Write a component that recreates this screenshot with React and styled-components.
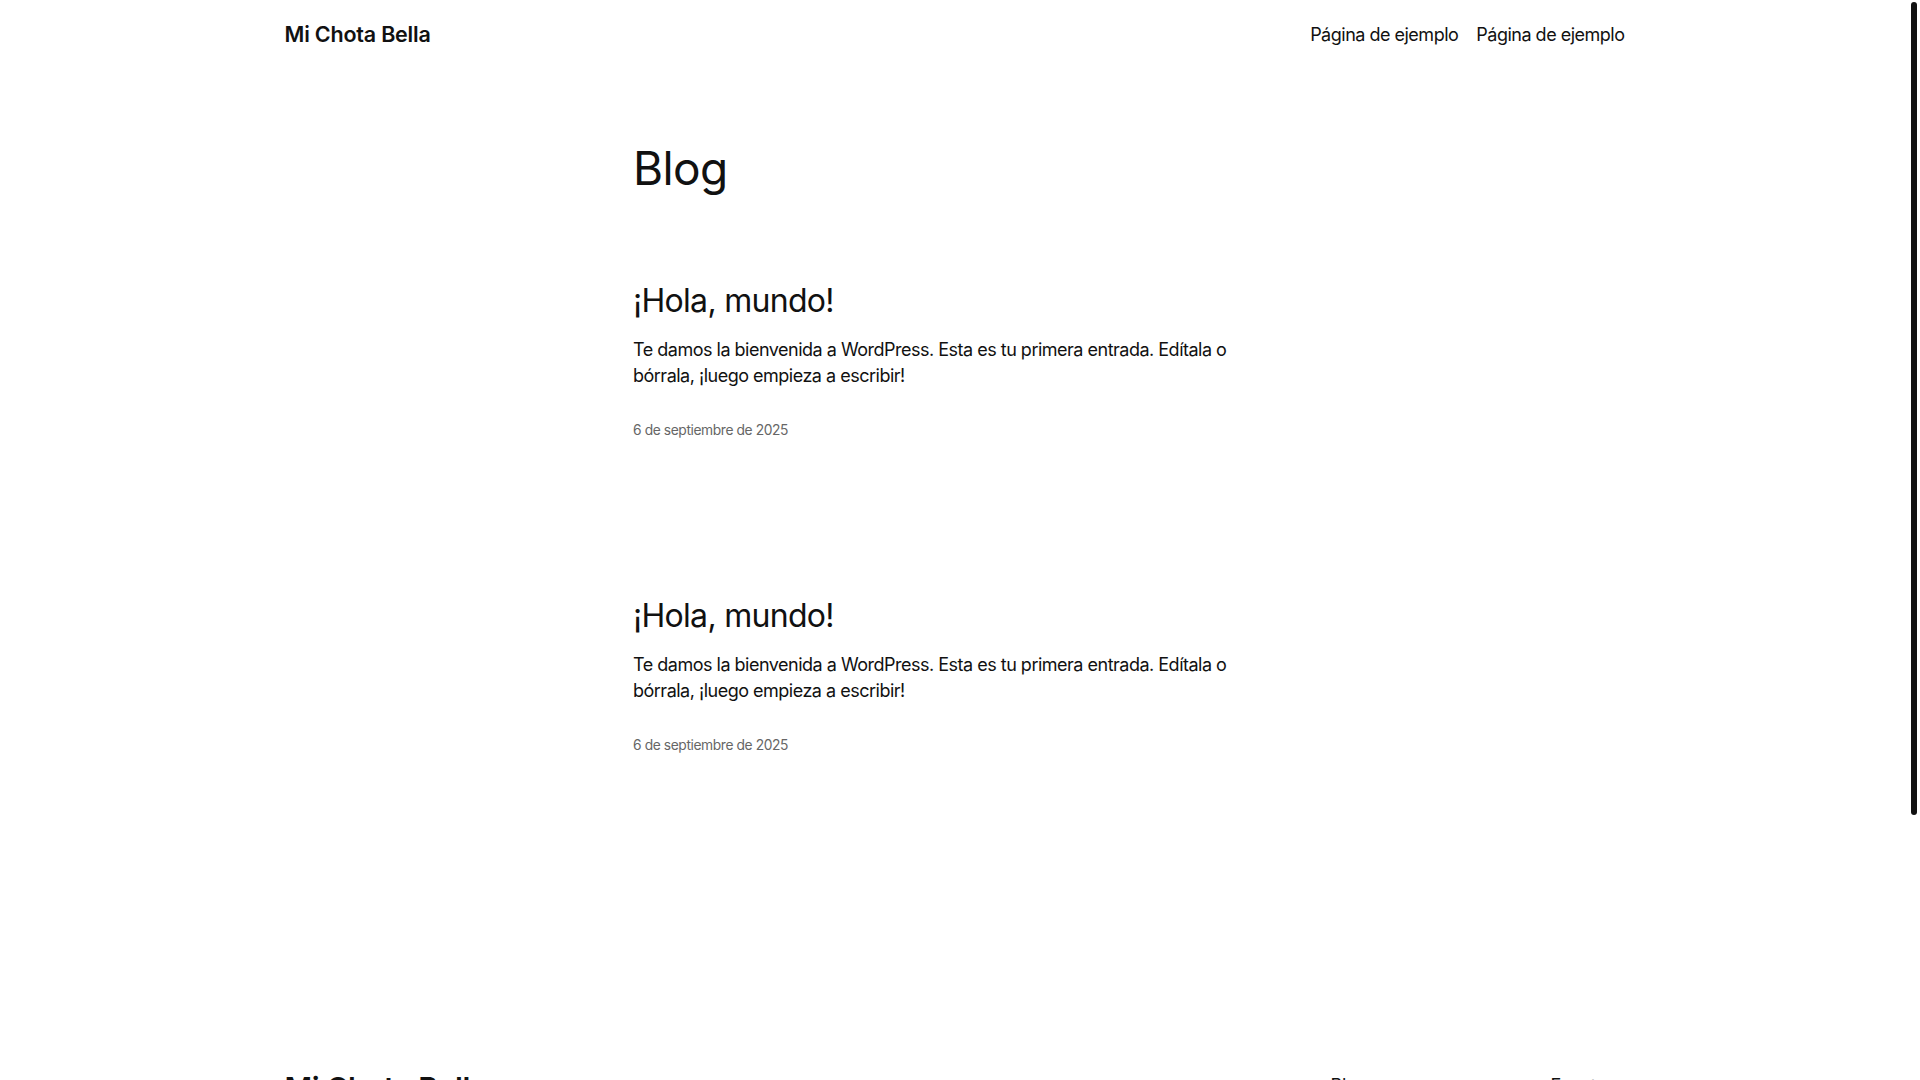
import styled, { createGlobalStyle } from "styled-components";

const GlobalStyle = createGlobalStyle`
  html, body {
    margin: 0;
    padding: 0;
    background: #ffffff;
  }
  body {
    font-family: Inter, "Noto Sans", "Liberation Sans", sans-serif;
    color: #111111;
    -webkit-font-smoothing: antialiased;
  }
`;

// the browser scrollbar of the reference: track reserved on the right, dark thumb over it
const Page = styled.div`
  min-height: 1436px;
  padding-right: 11px;
`;

const ScrollThumb = styled.div`
  position: fixed;
  top: 2px;
  right: 3px;
  width: 6px;
  height: 813px;
  border-radius: 3px;
  background: #111111;
`;

const Wide = styled.div`
  width: 1340px;
  margin: 0 auto;
`;

const Header = styled(Wide)`
  height: 68px;
  display: flex;
  align-items: center;
  justify-content: space-between;
`;

const SiteTitle = styled.a`
  font-size: 21.5px;
  font-weight: 600;
  letter-spacing: -0.2px;
  color: #111;
  text-decoration: none;
`;

const Nav = styled.nav`
  display: flex;
  gap: 18px;
`;

const NavLink = styled.a`
  font-size: 18px;
  font-weight: 400;
  letter-spacing: -0.5px;
  color: #111;
  text-decoration: none;
`;

const Main = styled.main`
  width: 643px;
  margin: 0 auto;
  padding-top: 75px;
`;

const PageTitle = styled.h1`
  margin: 0;
  font-size: 46px;
  line-height: 50px;
  font-weight: 400;
  letter-spacing: -0.6px;
`;

const PostList = styled.div`
  display: flex;
  flex-direction: column;
  gap: 158px;
  padding-top: 90px;
`;

const Post = styled.article`
  display: flex;
  flex-direction: column;
`;

const PostTitle = styled.h2`
  margin: 0;
  font-size: 32px;
  line-height: 36px;
  font-weight: 400;
  letter-spacing: -0.7px;
`;

const Excerpt = styled.p`
  margin: 18px 0 0;
  font-size: 18px;
  line-height: 26px;
  letter-spacing: -0.5px;
`;

const PostDate = styled.time`
  margin-top: 31px;
  font-size: 13.8px;
  line-height: 20px;
  letter-spacing: -0.4px;
  color: #666;
`;

const Footer = styled(Wide)`
  padding: 313px 0 120px;
  display: flex;
  align-items: flex-start;
`;

const FooterTitle = styled.a`
  flex: 1;
  font-size: 30px;
  line-height: 40px;
  font-weight: 600;
  letter-spacing: -0.4px;
  color: #111;
  text-decoration: none;
`;

const FooterCols = styled.div`
  display: flex;
  margin-top: 6px;
`;

const FooterCol = styled.ul`
  list-style: none;
  margin: 0;
  padding: 0;
  width: ${(p) => p.$w}px;
  display: flex;
  flex-direction: column;
  gap: 14px;
`;

const FooterLink = styled.li`
  font-size: 18px;
  line-height: 24px;
  letter-spacing: -0.4px;
`;

const posts = [
  { id: 1, date: "2025-09-06" },
  { id: 2, date: "2025-09-06" },
];

export default function App() {
  return (
    <>
      <GlobalStyle />
      <Page>
        <Header as="header">
          <SiteTitle href="#">Mi Chota Bella</SiteTitle>
          <Nav>
            <NavLink href="#">Página de ejemplo</NavLink>
            <NavLink href="#">Página de ejemplo</NavLink>
          </Nav>
        </Header>
        <Main>
          <PageTitle>Blog</PageTitle>
          <PostList>
            {posts.map((p) => (
              <Post key={p.id}>
                <PostTitle>¡Hola, mundo!</PostTitle>
                <Excerpt>
                  Te damos la bienvenida a WordPress. Esta es tu primera entrada. Edítala o
                  bórrala, ¡luego empieza a escribir!
                </Excerpt>
                <PostDate dateTime={p.date}>6 de septiembre de 2025</PostDate>
              </Post>
            ))}
          </PostList>
        </Main>
        <Footer as="footer">
          <FooterTitle href="#">Mi Chota Bella</FooterTitle>
          <FooterCols>
            <FooterCol $w={220}>
              <FooterLink>Blog</FooterLink>
              <FooterLink>Acerca de</FooterLink>
              <FooterLink>Preguntas frecuentes</FooterLink>
              <FooterLink>Autores</FooterLink>
            </FooterCol>
            <FooterCol $w={74}>
              <FooterLink>Eventos</FooterLink>
              <FooterLink>Tienda</FooterLink>
              <FooterLink>Patrones</FooterLink>
              <FooterLink>Temas</FooterLink>
            </FooterCol>
          </FooterCols>
        </Footer>
      </Page>
      <ScrollThumb />
    </>
  );
}
